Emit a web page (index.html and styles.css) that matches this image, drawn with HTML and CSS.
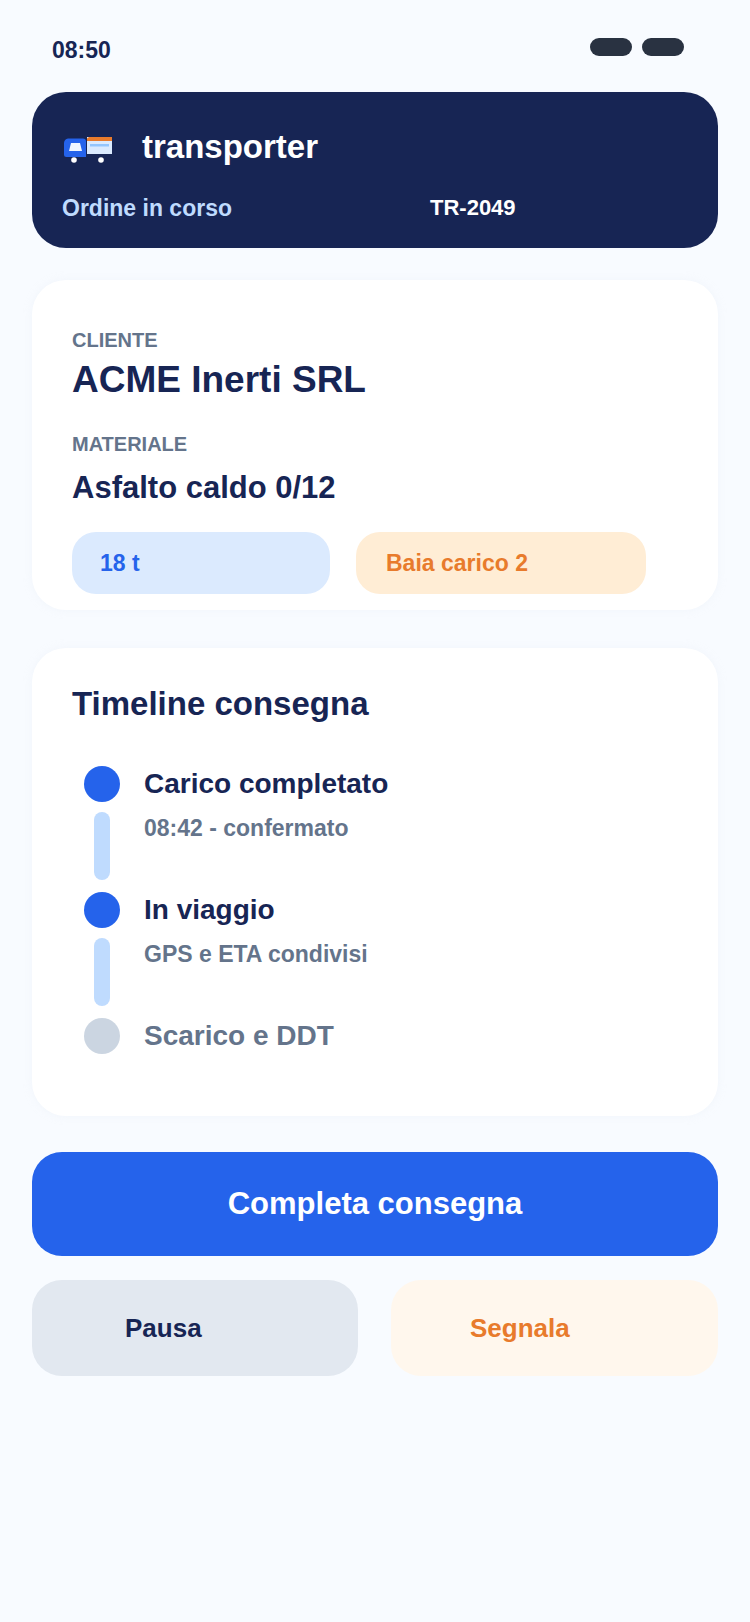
FILE: index.html
```html
<!DOCTYPE html>
<html lang="it">
<head>
<meta charset="utf-8">
<title>transporter</title>
<link rel="stylesheet" href="styles.css">
</head>
<body>
<main class="screen">
  <div class="status">
    <span class="time">08:50</span>
    <div class="pills"><span class="pill"></span><span class="pill"></span></div>
  </div>
  <header class="hero">
    <div class="brand">
      <svg class="truck" viewBox="0 0 50 26" width="50" height="26" aria-hidden="true">
        <path d="M4 1.5h15a3 3 0 0 1 3 3V20H2.5A2.5 2.5 0 0 1 0 17.500V6a5 5 0 0 1 4-4.500z" fill="#2563eb"/>
        <path d="M7 6h9l2 8H5z" fill="#eff6ff"/>
        <rect x="23" y="0" width="25" height="17" fill="#dbeafe"/>
        <path d="M23 4V1.500L25 0h23v4z" fill="#e87b2c"/>
        <rect x="26" y="7" width="19" height="2.500" fill="#93c5fd"/>
        <circle cx="10" cy="23" r="2.800" fill="#fff"/>
        <circle cx="37" cy="23" r="2.800" fill="#fff"/>
      </svg>
      <span class="brand-name">transporter</span>
    </div>
    <div class="hero-row">
      <span class="hero-label">Ordine in corso</span>
      <span class="hero-code">TR-2049</span>
    </div>
  </header>
  <section class="card order">
    <div class="label">CLIENTE</div>
    <div class="client">ACME Inerti SRL</div>
    <div class="label label-second">MATERIALE</div>
    <div class="material">Asfalto caldo 0/12</div>
    <div class="chips">
      <span class="chip chip-blue">18 t</span>
      <span class="chip chip-orange">Baia carico 2</span>
    </div>
  </section>
  <section class="card timeline">
    <h2 class="timeline-title">Timeline consegna</h2>
    <div class="step">
      <div class="rail"><span class="dot"></span><span class="line"></span></div>
      <div class="step-body"><div class="step-name">Carico completato</div><div class="step-note">08:42 - confermato</div></div>
    </div>
    <div class="step">
      <div class="rail"><span class="dot"></span><span class="line"></span></div>
      <div class="step-body"><div class="step-name">In viaggio</div><div class="step-note">GPS e ETA condivisi</div></div>
    </div>
    <div class="step">
      <div class="rail"><span class="dot dot-off"></span></div>
      <div class="step-body"><div class="step-name step-name-off">Scarico e DDT</div></div>
    </div>
  </section>
  <button class="primary" type="button">Completa consegna</button>
  <div class="actions">
    <button class="secondary pause" type="button">Pausa</button>
    <button class="secondary report" type="button">Segnala</button>
  </div>
</main>
</body>
</html>
```
FILE: styles.css
```css
* { box-sizing: border-box; }
html, body { margin: 0; padding: 0; }
body {
  width: 750px;
  height: 1622px;
  background: #f8fbff;
  font-family: "Liberation Sans", Arial, sans-serif;
  font-weight: 700;
  color: #172554;
  overflow: hidden;
}
.screen { padding: 0 32px; }
.status {
  height: 92px;
  padding: 38px 34px 0 20px;
  display: flex;
  justify-content: space-between;
  align-items: flex-start;
}
.time { font-size: 23px; line-height: 24px; color: #172554; }
.pills { display: flex; gap: 10px; }
.pill { width: 42px; height: 18px; border-radius: 9px; background: #293241; }
.hero {
  height: 156px;
  border-radius: 34px;
  background: #172554;
  padding: 36px 28px 0 30px;
}
.brand { display: flex; align-items: center; height: 38px; }
.truck { margin: 6px 0 0 2px; flex: none; }
.brand-name { margin-left: 28px; font-size: 33px; line-height: 38px; color: #fff; }
.hero-row { display: flex; margin-top: 28px; align-items: center; height: 28px; }
.hero-label { width: 368px; font-size: 23px; color: #bfdbfe; }
.hero-code { font-size: 22px; color: #fff; }
.card { background: #fff; border-radius: 34px; box-shadow: 0 0 8px rgba(226, 232, 240, .25); }
.order { margin-top: 32px; height: 330px; padding: 48px 40px 0; }
.label { font-size: 20px; line-height: 24px; color: #64748b; }
.label-second { margin-top: 30px; }
.client { margin-top: 6px; font-size: 37px; line-height: 44px; }
.material { margin-top: 14px; font-size: 31px; line-height: 36px; }
.chips { display: flex; gap: 26px; margin-top: 26px; }
.chip { height: 62px; border-radius: 24px; display: flex; align-items: center; font-size: 23px; }
.chip-blue { width: 258px; padding-left: 28px; background: #dbeafe; color: #2563eb; }
.chip-orange { width: 290px; padding-left: 30px; background: #ffedd5; color: #e87b2c; }
.timeline { margin-top: 38px; height: 468px; padding: 36px 40px 0; }
.timeline-title { margin: 0 0 42px; font-size: 33px; line-height: 40px; font-weight: 700; }
.step { display: flex; height: 126px; }
.rail { width: 72px; padding-left: 12px; display: flex; flex-direction: column; }
.dot { width: 36px; height: 36px; border-radius: 50%; background: #2563eb; flex: none; }
.dot-off { background: #cbd5e1; }
.line { width: 16px; height: 68px; margin: 10px 0 0 10px; border-radius: 8px; background: #bfdbfe; }
.step-body { padding-left: -1px; }
.step-name { font-size: 28px; line-height: 36px; color: #172554; }
.step-name-off { color: #64748b; }
.step-note { margin-top: 12px; font-size: 23px; line-height: 28px; color: #64748b; }
.primary, .secondary { border: 0; font: inherit; display: block; font-weight: 700; }
.primary {
  width: 100%;
  height: 104px;
  margin-top: 36px;
  border-radius: 30px;
  background: #2563eb;
  color: #fff;
  font-size: 31px;
}
.actions { display: flex; justify-content: space-between; margin-top: 24px; }
.secondary { height: 96px; border-radius: 30px; font-size: 26px; text-align: left; }
.pause { width: 326px; padding-left: 93px; background: #e2e8f0; color: #172554; }
.report { width: 327px; padding-left: 79px; background: #fff7ed; color: #e87b2c; }
```
